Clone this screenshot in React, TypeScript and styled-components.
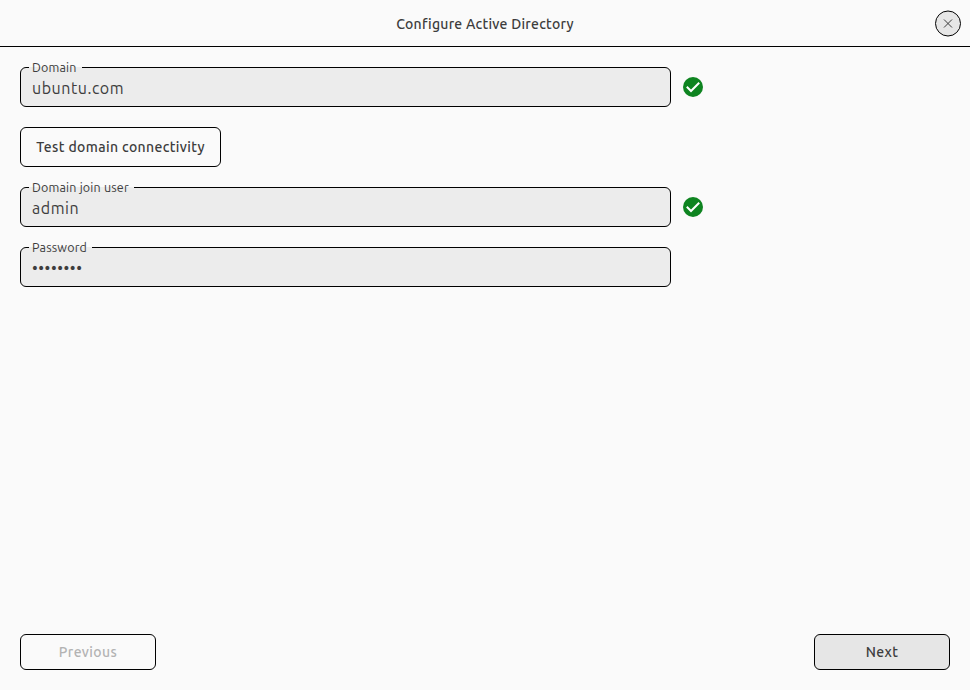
import React from "react";
import styled, { createGlobalStyle } from "styled-components";

const GlobalStyle = createGlobalStyle`
  * { box-sizing: border-box; }
  body {
    margin: 0;
    background: #fafafa;
    color: #3d3d3d;
    font-family: Ubuntu, "Noto Sans", sans-serif;
  }
`;

const Window = styled.div`
  display: flex;
  flex-direction: column;
  height: 690px;
`;

const TitleBar = styled.header`
  display: grid;
  grid-template-columns: 1fr auto 1fr;
  align-items: center;
  height: 47px;
  padding: 1px 9px 0;
  border-bottom: 1px solid #000;
`;

const Title = styled.h1`
  grid-column: 2;
  margin: 0;
  padding-top: 1px;
  font-size: 14px;
  line-height: 20px;
  font-weight: 500;
  letter-spacing: 0.25px;
  white-space: nowrap;
`;

const CloseButton = styled.button`
  justify-self: end;
  width: 26px;
  height: 27px;
  padding: 0;
  border: 0;
  background: transparent;
  svg { display: block; }
`;

const Form = styled.main`
  flex: 1;
  display: flex;
  flex-direction: column;
  align-items: flex-start;
  gap: 20px;
  padding: 20px;
`;

const FieldRow = styled.div`
  display: flex;
  align-items: center;
  gap: 12px;
  height: 40px;
`;

const Field = styled.fieldset`
  width: 651px;
  height: 47px;
  min-width: 0;
  margin: -7px 0 0;
  padding: 0 11px 0 8px;
  border: 1px solid #000;
  border-radius: 6px;
  background: #ececec;
`;

const Legend = styled.legend`
  height: 15px;
  padding: 0 5px 0 3px;
  font-size: 12.5px;
  line-height: 15px;
  letter-spacing: 0.18px;
`;

const Input = styled.input`
  display: block;
  width: 100%;
  height: 26px;
  padding: 0 3px;
  border: 0;
  outline: 0;
  background: transparent;
  color: #3d3d3d;
  font: 400 16px/26px Ubuntu, "Noto Sans", sans-serif;
  letter-spacing: 0.55px;
`;

const Button = styled.button<{ $filled?: boolean; $wide?: boolean }>`
  width: ${(p) => (p.$wide ? 201 : 136)}px;
  height: ${(p) => (p.$wide ? 40 : 36)}px;
  padding: 0;
  border: 1px solid #000;
  border-radius: 6px;
  background: ${(p) => (p.$filled ? "#e6e6e6" : "transparent")};
  color: #3d3d3d;
  font: 500 14px/20px Ubuntu, "Noto Sans", sans-serif;
  letter-spacing: 0.37px;
  &:disabled { color: #b3b3b3; }
`;

const Footer = styled.footer`
  display: flex;
  justify-content: space-between;
  padding: 0 20px 20px;
`;

const CloseIcon = () => (
  <svg width="26" height="27" viewBox="0 0 26 27">
    <circle cx="13" cy="13.5" r="12.5" fill="#e6e6e6" stroke="#000" />
    <path d="M9 9.5 17 17.5M17 9.5 9 17.5" stroke="#3d3d3d" />
  </svg>
);

const Success = () => (
  <svg width="20" height="20" viewBox="0 0 20 20">
    <circle cx="10" cy="10" r="10" fill="#0e8420" />
    <path d="M3.8 9.8 8 14 16.2 5.8" fill="none" stroke="#fff" strokeWidth="2" />
  </svg>
);

interface TextFieldProps {
  label: string;
  value: string;
  type?: string;
  valid?: boolean;
}

const TextField = ({ label, value, type = "text", valid }: TextFieldProps) => (
  <FieldRow>
    <Field>
      <Legend>{label}</Legend>
      <Input aria-label={label} type={type} defaultValue={value} />
    </Field>
    {valid && <Success />}
  </FieldRow>
);

export default function App() {
  return (
    <Window>
      <GlobalStyle />
      <TitleBar>
        <Title>Configure Active Directory</Title>
        <CloseButton aria-label="Close">
          <CloseIcon />
        </CloseButton>
      </TitleBar>
      <Form>
        <TextField label="Domain" value="ubuntu.com" valid />
        <Button $wide>Test domain connectivity</Button>
        <TextField label="Domain join user" value="admin" valid />
        <TextField label="Password" value="password" type="password" />
      </Form>
      <Footer>
        <Button disabled>Previous</Button>
        <Button $filled>Next</Button>
      </Footer>
    </Window>
  );
}
